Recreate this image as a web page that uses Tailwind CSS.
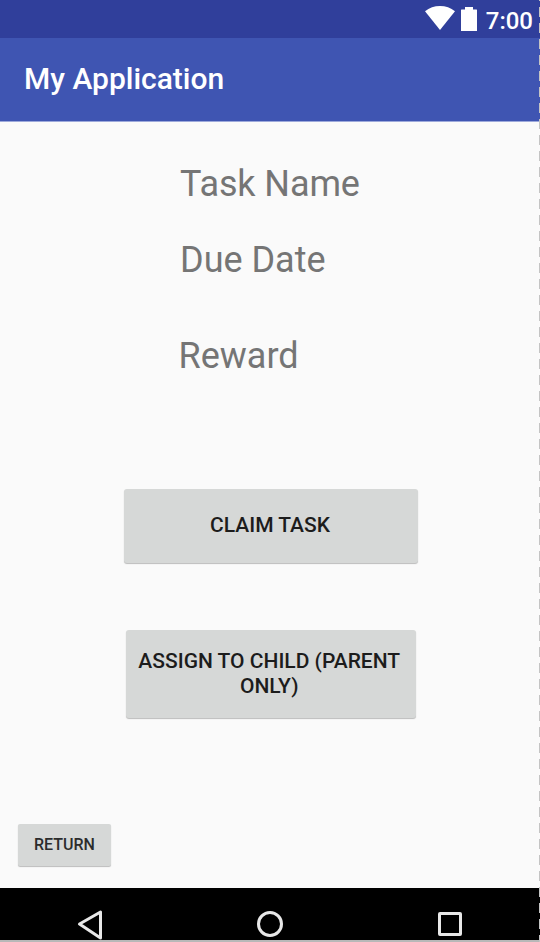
<!DOCTYPE html>
<html lang="en">
<head>
<meta charset="utf-8">
<title>My Application</title>
<script src="https://cdn.jsdelivr.net/npm/@tailwindcss/browser@4"></script>
</head>
<body class="bg-[#fafafa]">
<div class="relative flex flex-col w-[540px] h-[942px] overflow-hidden bg-[#fafafa] font-['Roboto',sans-serif]">
  <header class="shrink-0">
    <div class="flex h-[38px] items-start justify-end bg-[#303f9b] pr-[7px] text-white">
      <svg class="mt-[6px] h-6 w-[30px]" viewBox="0 0 30 24" fill="currentColor"><path d="M0 5.300Q6.500 0 15 0T30 5.300L15 24Z"/></svg>
      <svg class="ml-[6px] mt-[7px] h-6 w-4" viewBox="0 0 16 24" fill="currentColor"><path d="M4 0h8v2.500h3.500q.5 0 .5 .5V24H0V3q0-.5 .5-.5H4Z"/></svg>
      <span class="ml-[9px] mt-[5px] text-[24px] leading-8 font-medium">7:00</span>
    </div>
    <div class="flex h-[84px] items-center border-b border-[#9da9db] bg-[#3f55b2] pb-px pl-6">
      <h1 class="text-[30px] leading-9 font-medium text-white">My Application</h1>
    </div>
  </header>
  <main class="flex h-[766px] shrink-0 flex-col text-[#757575]">
    <p class="mt-[38px] ml-[180px] text-[36px] leading-[48px] tracking-[-0.1px]">Task Name</p>
    <p class="mt-[28px] ml-[180px] text-[36px] leading-[48px]">Due Date</p>
    <p class="mt-[48px] ml-[178.500px] text-[36px] leading-[48px]">Reward</p>
    <button class="mt-[109px] ml-[124px] h-[74px] w-[294px] rounded-[3px] bg-[#d6d8d7] pr-[2px] pb-[2px] text-[21px] leading-[25px] font-medium text-[#1c1c1c] shadow-[0_1px_1px_#00000040]">CLAIM TASK</button>
    <button class="mt-[66.500px] ml-[125.500px] h-[88.500px] w-[290.500px] rounded-[3px] bg-[#d6d8d7] pr-[3px] text-[21px] leading-[25px] font-medium text-[#1c1c1c] shadow-[0_1px_1px_#00000040]">ASSIGN TO CHILD (PARENT<br>ONLY)</button>
    <button class="mt-[106px] ml-[18px] h-[42px] w-[93px] rounded-[2px] bg-[#d6d8d7] text-[16px] leading-5 font-medium text-[#2c2c2c] shadow-[0_1px_1px_#00000040]">RETURN</button>
  </main>
  <nav class="flex h-[54px] shrink-0 border-b-2 border-[#b8b8b8] bg-black">
    <svg class="h-[52px] w-[540px]" viewBox="0 0 540 52" fill="none" stroke="#e8e8e8" stroke-width="3" stroke-linejoin="round">
      <path d="M100.500 24v26L79.500 36Z"/>
      <circle cx="270" cy="36" r="11.500"/>
      <rect x="439.500" y="25.500" width="21" height="21" rx=".5"/>
    </svg>
  </nav>
  <div class="absolute top-0 right-0 h-full w-px bg-[repeating-linear-gradient(to_bottom,#c4c4c4_0_1px,transparent_1px_7px,#c4c4c4_7px_16px)]"></div>
</div>
</body>
</html>
